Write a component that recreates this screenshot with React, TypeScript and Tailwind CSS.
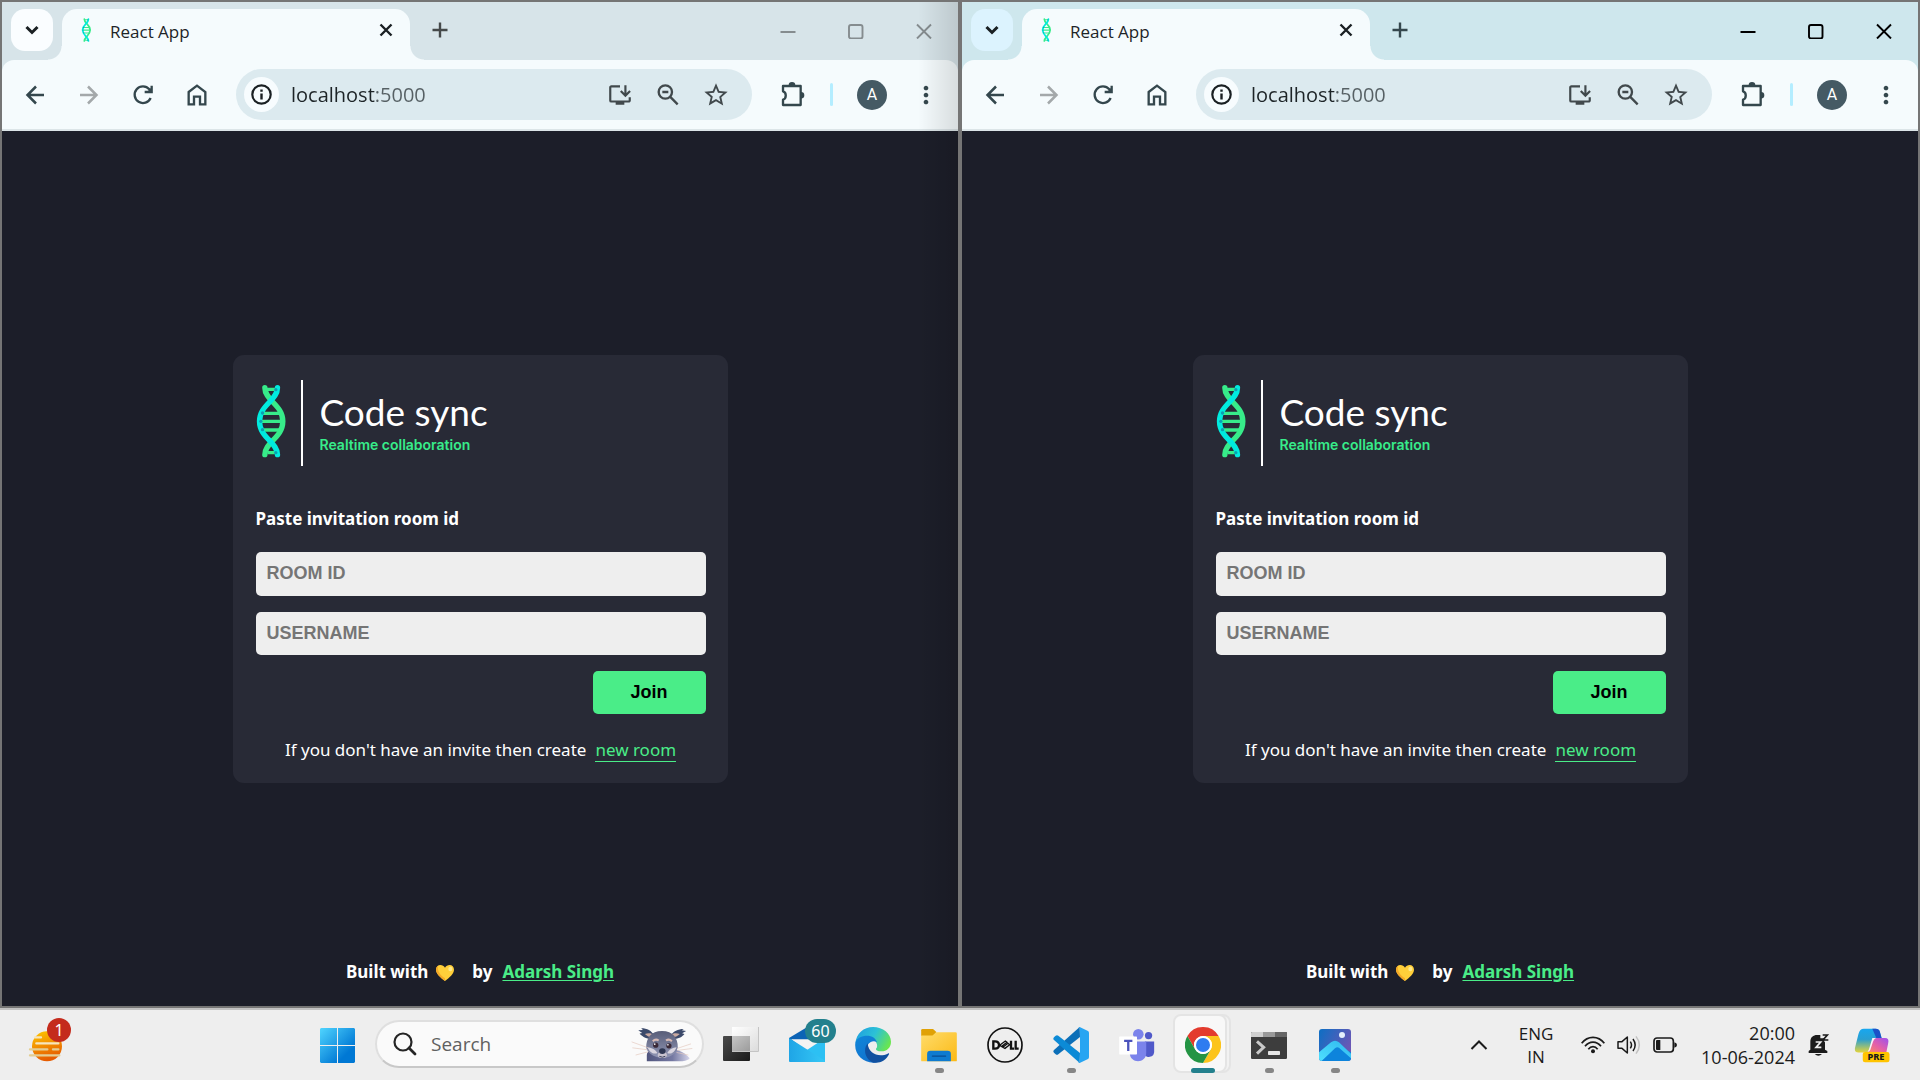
import React from "react";
import { MdOutlineInstallDesktop, MdStarBorder, MdMoreVert } from "react-icons/md";

const UI = "font-['Noto_Sans','Open_Sans',sans-serif]";

function Dna({ className }: { className: string }) {
  return (
    <svg viewBox="50 42 92 222" className={className} aria-hidden="true" fill="none">
      <g stroke="#37ec8a" strokeWidth="10">
        <path d="M78 58H112M84 248H112M68 130H124M64 154H128M68 180H124" />
      </g>
      <path d="M76 53C76 92 130 104 130 154S76 216 76 254" stroke="#37ec8a" strokeWidth="16" strokeLinecap="round" />
      <path d="M114 53C114 92 60 104 60 154S114 216 114 254" stroke="#00ebdf" strokeWidth="16" strokeLinecap="round" />
      <g fill="#0b9fb0">
        <circle cx="109" cy="59" r="5" />
        <circle cx="69" cy="129" r="5" />
        <circle cx="64" cy="154" r="5" />
        <circle cx="69" cy="179" r="5" />
        <circle cx="109" cy="248" r="5" />
      </g>
    </svg>
  );
}

function IconButton({ label, children }: { label: string; children: React.ReactNode }) {
  return (
    <button type="button" aria-label={label} className="flex size-[30px] shrink-0 items-center justify-center">
      {children}
    </button>
  );
}

function TabStrip({ active }: { active: boolean }) {
  return (
    <div className="flex h-[58px] items-start pt-[7px]">
      <button
        type="button"
        aria-label="Search tabs"
        className={`ml-[9px] flex size-[42px] shrink-0 items-center justify-center rounded-[14px] ${active ? "bg-[#dcf3fe]" : "bg-[#fafdff]"}`}
      >
        <svg viewBox="0 0 42 42" className="size-full" fill="none" stroke="#1a2023" strokeWidth="3">
          <path d="M15.500 18l5.500 5.500 5.500-5.500" />
        </svg>
      </button>
      <div className="relative ml-[9px] flex h-[51px] w-[348px] items-start rounded-t-[15px] bg-[#f5fbfd] pt-[5px] before:absolute before:bottom-0 before:-left-[14px] before:size-[14px] before:bg-[radial-gradient(circle_at_0_0,transparent_13px,#f5fbfd_14px)] after:absolute after:-right-[14px] after:bottom-0 after:size-[14px] after:bg-[radial-gradient(circle_at_100%_0,transparent_13px,#f5fbfd_14px)]">
        <Dna className="mt-1 ml-[19px] h-6 w-[11px]" />
        <span className="ml-[18px] font-['Open_Sans',sans-serif] text-[17px] leading-9 text-[#1d2427]">React App</span>
        <button type="button" aria-label="Close tab" className="mt-[2px] mr-[10px] ml-auto flex size-7 items-center justify-center">
          <svg viewBox="0 0 28 28" className="size-full" stroke="#1a2023" strokeWidth="2.400">
            <path d="M8.500 8.500l11 11M19.500 8.500l-11 11" />
          </svg>
        </button>
      </div>
      <button type="button" aria-label="New tab" className="mt-[6px] ml-[15px] flex size-[30px] items-center justify-center">
        <svg viewBox="0 0 30 30" className="size-full" stroke={active ? "#34474d" : "#45494a"} strokeWidth="2.400">
          <path d="M15 7.500v15M7.500 15h15" />
        </svg>
      </button>
      <div className={`ml-auto flex ${active ? "text-black" : "text-[#858c8f]"}`}>
        <button type="button" aria-label="Minimize" className="flex h-11 w-[68px] items-center justify-center">
          <svg viewBox="0 0 16 16" className="size-4" stroke="currentColor" strokeWidth="2"><path d="M.5 9h15" /></svg>
        </button>
        <button type="button" aria-label="Maximize" className="flex h-11 w-[68px] items-center justify-center">
          <svg viewBox="0 0 16 16" className="size-4" fill="none" stroke="currentColor" strokeWidth="1.900"><rect x="1" y="2" width="13.500" height="13.500" rx="2" /></svg>
        </button>
        <button type="button" aria-label="Close" className="flex h-11 w-[68px] items-center justify-center">
          <svg viewBox="0 0 16 16" className="size-4" stroke="currentColor" strokeWidth="1.900"><path d="M1 1.500l14 14M15 1.500l-14 14" /></svg>
        </button>
      </div>
    </div>
  );
}

function Toolbar() {
  return (
    <div className="flex h-[71px] items-center rounded-t-xl border-b-2 border-[#dce5e8] bg-[#f5fbfd] pl-[18px]">
      <div className="flex gap-6">
        <IconButton label="Back">
          <svg viewBox="0 0 30 30" className="size-full" fill="none" stroke="#34474d" strokeWidth="2.500">
            <path d="M16 6.500L7.500 15l8.500 8.500M7.500 15H24" />
          </svg>
        </IconButton>
        <IconButton label="Forward">
          <svg viewBox="0 0 30 30" className="size-full" fill="none" stroke="#a3a8aa" strokeWidth="2.500">
            <path d="M14 6.500l8.500 8.500-8.500 8.500M22.500 15H6" />
          </svg>
        </IconButton>
        <IconButton label="Reload">
          <svg viewBox="0 0 90 90" className="size-full" fill="none" stroke="#34474d" strokeWidth="7">
            <path d="M68 54A25 25 0 1 1 64 28L69 35" />
            <path d="M71 17V36H50" />
            <path d="M71 22V36H57z" fill="#34474d" stroke="none" />
          </svg>
        </IconButton>
        <IconButton label="Home">
          <svg viewBox="0 0 90 90" className="size-full" fill="none" stroke="#34474d" strokeWidth="7">
            <path d="M20 36L45 17l25 19v37H54V50H36v23H20z" />
          </svg>
        </IconButton>
      </div>
      <div className="ml-6 flex h-[51px] min-w-0 flex-1 items-center rounded-full bg-[#dceaef] pr-[21px] pl-2">
        <button type="button" aria-label="View site information" className="flex size-[35px] shrink-0 items-center justify-center rounded-full bg-[#f7fcfe]">
          <svg viewBox="0 0 21 21" className="size-[21px]" fill="none" stroke="#1a2023" strokeWidth="2.200">
            <circle cx="10.500" cy="10.500" r="9.200" />
            <path d="M10.500 9.500v6M10.500 5.500v2.200" strokeWidth="2.400" />
          </svg>
        </button>
        <input
          type="text"
          aria-label="Address"
          defaultValue="localhost:5000"
          className="ml-3 h-9 min-w-0 flex-1 bg-[linear-gradient(90deg,#1d2427_84px,#566064_84px)] bg-clip-text font-['Open_Sans',sans-serif] text-[20px] text-transparent outline-none"
        />
        <div className="flex gap-[18px] text-[#41494c]">
          <IconButton label="Install app"><MdOutlineInstallDesktop className="size-[26px]" /></IconButton>
          <IconButton label="Zoom">
            <svg viewBox="0 0 90 90" className="size-full" fill="none" stroke="currentColor" strokeWidth="7">
              <circle cx="37" cy="36" r="20" />
              <path d="M51 50l23 23M28 36h18" />
            </svg>
          </IconButton>
          <IconButton label="Bookmark this tab"><MdStarBorder className="size-7" /></IconButton>
        </div>
      </div>
      <div className="ml-[25px] flex items-center pr-[17px]">
        <IconButton label="Extensions">
          <svg viewBox="0 0 90 90" className="size-full">
            <path d="M18 18H71V75H18V59C29 56 29 37 18 34z" fill="none" stroke="#34474d" strokeWidth="7" strokeLinejoin="round" />
            <path d="M35 16a10 10 0 0 1 20 0zM72 36a10 10 0 0 1 0 20z" fill="#34474d" />
          </svg>
        </IconButton>
        <span className="ml-[23px] h-[23px] w-[3px] rounded-full bg-[#b4edff]" />
        <button type="button" aria-label="Profile" className="ml-6 size-[30px] rounded-full bg-[#455a64] font-['Roboto',sans-serif] text-[16px] leading-[30px] text-white">
          A
        </button>
        <span className="ml-6 flex">
          <IconButton label="Menu"><MdMoreVert className="size-7 text-[#34474d]" /></IconButton>
        </span>
      </div>
    </div>
  );
}

function JoinCard({ id }: { id: string }) {
  return (
    <form className="w-[495px] rounded-[11px] bg-[#282a36] pt-[23px] pr-[22px] pb-4 pl-[23px]" onSubmit={(e) => e.preventDefault()}>
      <div className="flex h-[90px] items-start pt-[2px]">
        <Dna className="mt-[4px] h-[74px] w-[31px]" />
        <div className="ml-[14px] h-[86px] w-[2px] bg-white" />
        <div className="mt-2 ml-[17px]">
          <h1 className="font-['Lato',sans-serif] text-[37px] leading-[47px] text-white">Code sync</h1>
          <p className="font-['Inter',sans-serif] text-[14px] leading-[20px] font-semibold text-[#37ec8a]">Realtime collaboration</p>
        </div>
      </div>
      <label htmlFor={`${id}-room`} className={`${UI} mt-[39px] block text-[17px] leading-6 font-bold text-white`}>
        Paste invitation room id
      </label>
      <input
        id={`${id}-room`}
        type="text"
        placeholder="ROOM ID"
        className="mt-[21px] block h-11 w-full rounded-[5px] bg-[#eee] px-[11px] font-['Liberation_Sans',sans-serif] text-[18px] font-bold text-black outline-none placeholder:text-[#757575]"
      />
      <input
        type="text"
        aria-label="Username"
        placeholder="USERNAME"
        className="mt-4 block h-[43px] w-full rounded-[5px] bg-[#eee] px-[11px] font-['Liberation_Sans',sans-serif] text-[18px] font-bold text-black outline-none placeholder:text-[#757575]"
      />
      <button type="submit" className="mt-4 ml-auto block h-[43px] w-[113px] rounded-[5px] bg-[#4aed88] font-['Liberation_Sans',sans-serif] text-[18px] font-bold text-black">
        Join
      </button>
      <p className={`${UI} mt-6 flex h-[29px] justify-center gap-[9px] text-[17px] leading-[24px] text-white`}>
        If you don't have an invite then create
        <a href="#new" className="h-6 border-b border-[#4aed88] text-[#4aed88]">new room</a>
      </p>
    </form>
  );
}

function BrowserWindow({ id, active }: { id: string; active: boolean }) {
  return (
    <section className="relative flex min-w-0 flex-1 flex-col border-2 border-[#757575] bg-[#1c1e29]">
      <div className={active ? "bg-[#cee7ed]" : "bg-[#d7e4e9]"}>
        <TabStrip active={active} />
        <Toolbar />
      </div>
      <main className="relative flex flex-1 items-center justify-center">
        <JoinCard id={id} />
        <footer className={`${UI} absolute inset-x-0 bottom-[22px] flex items-center justify-center text-[17px] leading-6 font-bold text-white`}>
          Built with
          <svg viewBox="0 0 54 48" className="mt-[2px] mr-[18px] ml-2 h-4 w-[18px]" role="img" aria-label="yellow heart">
            <path d="M27 48C14 37 0 27 0 14 0 5 6 0 13 0c6 0 11 3 14 8 3-5 8-8 14-8 7 0 13 5 13 14 0 13-14 23-27 34z" fill="#ffcf3a" />
            <path d="M27 48C14 37 0 27 0 14 0 8 3 4 6 2 3 18 14 32 27 40z" fill="#f5a928" />
            <ellipse cx="43" cy="12" rx="6" ry="7" fill="#ffe98c" />
          </svg>
          by
          <a href="#author" className="ml-[10px] text-[#4aed88] underline underline-offset-2">Adarsh Singh</a>
        </footer>
      </main>
      {!active && <div className="pointer-events-none absolute inset-y-0 right-0 w-10 bg-linear-to-r from-transparent to-black/12" />}
    </section>
  );
}

function TaskIcon({ label, running, children }: { label: string; running?: boolean; children: React.ReactNode }) {
  return (
    <button type="button" aria-label={label} className="relative flex h-[70px] w-[66px] shrink-0 items-center justify-center">
      {children}
      {running && <span className="absolute bottom-[7px] left-[29px] h-[5px] w-[9px] rounded-full bg-[#868686]" />}
    </button>
  );
}

function Numbat() {
  return (
    <svg viewBox="786 88 188 104" className="h-[35px] w-[62px]" aria-hidden="true">
      <defs>
        <linearGradient id="body" x1="0" x2="1"><stop offset="0" stopColor="#50557d" /><stop offset=".6" stopColor="#7579a2" /><stop offset="1" stopColor="#d5d5ea" /></linearGradient>
        <linearGradient id="head" x1="0" x2="0" y1="0" y2="1"><stop offset="0" stopColor="#585d78" /><stop offset="1" stopColor="#9196b5" /></linearGradient>
      </defs>
      <path d="M834 191V172c0-14 20-22 44-22 42 0 70 12 86 32-6 8-20 9-30 9z" fill="url(#body)" />
      <path d="M846 124c-18-2-28-10-34-17l8-2-12-8 14-1-5-5c18 0 32 8 38 20z" fill="#3c4a6b" />
      <path d="M914 124c18-2 28-8 34-16l-7-2 12-7-13-2 6-4c-18 0-32 8-38 18z" fill="#3c4a6b" />
      <path d="M852 118c-10 0-18-4-24-10 10-4 20-3 28 3zM910 118c10 0 18-4 24-10-10-4-20-3-28 3z" fill="#c9a9a0" />
      <path d="M832 150c0-30 14-51 48-51s48 21 48 51c-6 20-28 31-46 31s-44-10-50-31z" fill="url(#head)" />
      <path d="M836 148c10 2 24 4 30 18-12 6-26-6-30-18zM924 148c-10 2-22 4-28 18 12 6 24-6 28-18z" fill="#d9d5e0" />
      <path d="M852 130c6-6 12-6 18-2M892 128c6-4 12-4 18 2" stroke="#d6b9b4" strokeWidth="6" fill="none" />
      <circle cx="861" cy="142" r="8" fill="#3b2a38" /><circle cx="901" cy="144" r="8" fill="#3b2a38" />
      <circle cx="858" cy="139" r="2.500" fill="#fff" /><circle cx="898" cy="141" r="2.500" fill="#fff" />
      <ellipse cx="881" cy="172" rx="14" ry="9" fill="#c8c3cf" />
      <ellipse cx="881" cy="160" rx="10" ry="9" fill="#2f3854" />
      <path d="M872 176q9 5 18 0" stroke="#343a55" strokeWidth="3" fill="none" />
      <path d="M838 150l-50-18M836 156l-46-6M838 162l-38 10M926 152l42-14M926 158l46-6M924 164l36 8" stroke="#e4c8bd" strokeWidth="2" />
    </svg>
  );
}

function Taskbar() {
  return (
    <nav className="flex h-[72px] shrink-0 border-t-2 border-[#c2c2c2] bg-[#eee]" aria-label="Taskbar">
      <div className="w-[304px] shrink-0 pl-[27px]">
        <button type="button" aria-label="Widgets" className="relative block h-[70px] w-[50px] pb-2">
          <svg viewBox="84 200 132 132" className="size-[44px]" aria-hidden="true">
            <defs><linearGradient id="sun" x1="0" x2="0.300" y1="0" y2="1"><stop offset="0" stopColor="#ffc800" /><stop offset="1" stopColor="#e65c00" /></linearGradient></defs>
            <circle cx="144" cy="282" r="45" fill="url(#sun)" />
            <g stroke="#f6e6bd" strokeWidth="7" strokeLinecap="round"><path d="M108 255h18M112 273h66" /><path d="M93 291h52M162 291h16M93 309h88" stroke="#e3cd93" /></g>
          </svg>
          <span className="absolute top-2 left-5 size-6 rounded-full bg-[#c42b1c] text-center font-['Noto_Sans',sans-serif] text-[16px] leading-6 text-white">1</span>
        </button>
      </div>
      <TaskIcon label="Start">
        <svg viewBox="0 0 35 35" className="size-[35px]">
          <defs><linearGradient id="win" x1="0" y1="0" x2="35" y2="35" gradientUnits="userSpaceOnUse"><stop stopColor="#50d5ff" /><stop offset=".75" stopColor="#0078d4" /></linearGradient></defs>
          <path d="M1 0H17V17H0V1zM18 0H34L35 1V17H18zM0 18H17V35H1L0 34zM18 18H35V34L34 35H18z" fill="url(#win)" />
        </svg>
      </TaskIcon>
      <label className="mt-[10px] ml-[5px] flex h-12 w-[329px] shrink-0 items-center rounded-full border-2 border-[#dfdfdf] border-b-[#c8c8c8] bg-[#fafafa] pr-[9px] pl-4">
        <svg viewBox="0 0 24 24" className="size-6" fill="none" stroke="#252525" strokeWidth="2.200" strokeLinecap="round">
          <circle cx="10" cy="10" r="8.500" /><path d="M16 16l6 6" strokeWidth="2.800" />
        </svg>
        <input type="search" aria-label="Search" placeholder="Search" className="ml-[14px] w-0 flex-1 bg-transparent font-['Open_Sans',sans-serif] text-[19px] outline-none placeholder:text-[#606060]" />
        <Numbat />
      </label>
      <div className="ml-1 flex shrink-0">
        <TaskIcon label="Task view">
          <svg viewBox="0 0 36 36" className="size-9">
            <defs>
              <linearGradient id="tv1" x1="0" y1="0" x2="1" y2="1"><stop stopColor="#4a4a4a" /><stop offset="1" stopColor="#1a1a1a" /></linearGradient>
              <linearGradient id="tv2" x1="0" y1="0" x2="1" y2="1"><stop stopColor="#ffffff" /><stop offset="1" stopColor="#dcdcdc" /></linearGradient>
              <linearGradient id="tv3" x1="0" y1="0" x2="1" y2="1"><stop stopColor="#c6c6c6" /><stop offset="1" stopColor="#9c9c9c" /></linearGradient>
            </defs>
            <rect y="9" width="27" height="25" rx="1" fill="url(#tv1)" />
            <path d="M9 0h26v24H9z" fill="url(#tv2)" />
            <path d="M9 9h18v15H9z" fill="url(#tv3)" />
            <path d="M9 24.500h26.500V0" stroke="#c4c4c4" fill="none" />
          </svg>
        </TaskIcon>
        <TaskIcon label="Mail">
          <svg viewBox="0 0 108 102" className="h-[34px] w-9">
            <defs><linearGradient id="mail" x1="0" x2="1"><stop stopColor="#1fa5e6" /><stop offset="1" stopColor="#35c8f6" /></linearGradient></defs>
            <path d="M0 30L50 0h20l38 28v30H0z" fill="#0c63b5" />
            <path d="M6 34h96L58 72z" fill="#f3f3f3" />
            <path d="M108 30V102H0z" fill="#2cc0f3" />
            <path d="M0 30L108 98q0 4-4 4H4q-4 0-4-4z" fill="url(#mail)" />
          </svg>
          <span className="absolute top-[9px] left-[31px] h-6 w-[31px] rounded-full bg-[#23808d] text-center font-['Noto_Sans',sans-serif] text-[16px] leading-6 text-white">60</span>
        </TaskIcon>
        <TaskIcon label="Edge">
          <svg viewBox="0 0 108 108" className="size-9">
            <defs>
              <linearGradient id="e1" x1="0" x2="1" y1=".2" y2=".6"><stop stopColor="#1f9fe0" /><stop offset=".5" stopColor="#2cc1d6" /><stop offset="1" stopColor="#6ae64e" /></linearGradient>
              <linearGradient id="e2" x1="0" x2=".6" y1="0" y2="1"><stop stopColor="#0f86d9" /><stop offset="1" stopColor="#1272ce" /></linearGradient>
            </defs>
            <path d="M1 48C4 20 26 0 54 0c30 0 54 20 54 44 0 18-13 29-28 29-12 0-18-4-17-8 5-5 4-12 1-18-8-17-42-22-63 1z" fill="url(#e1)" />
            <path d="M1 48C5 33 20 26 36 26c15 0 27 8 30 20-8-7-22-3-28 8-9 18 3 44 26 49 8 2 10 1 6 2C34 115-4 88 1 48z" fill="url(#e2)" />
            <path d="M38 49c-16 20-6 50 18 58 20 3 38-8 46-25 1-3-1-4-4-2-24 12-58 2-60-31z" fill="#1050a0" />
          </svg>
        </TaskIcon>
        <TaskIcon label="File Explorer" running>
          <svg viewBox="0 0 108 100" className="h-[33px] w-9">
            <defs><linearGradient id="fold" x1="0" y1="0" x2="1" y2="1"><stop stopColor="#ffdc6b" /><stop offset="1" stopColor="#fbb915" /></linearGradient></defs>
            <path d="M0 4q0-4 4-4h32l10 9-10 12H0z" fill="#e0a106" />
            <path d="M0 20h34l12-10h58q4 0 4 4v82q0 2-3 2H3q-3 0-3-2z" fill="url(#fold)" />
            <path d="M18 98V76q0-10 10-10h52q10 0 10 10v22z" fill="#0f7bd0" />
            <path d="M34 82h40" stroke="#084d93" strokeWidth="4" strokeLinecap="round" />
          </svg>
        </TaskIcon>
        <TaskIcon label="Dell">
          <svg viewBox="0 0 108 108" className="size-9" fill="none" stroke="#111">
            <circle cx="54" cy="54" r="51" strokeWidth="5" />
            <path d="M19 43v22h5c16 0 16-22 0-22zM72 41v24h9M86 41v24h9" strokeWidth="7" />
            <path d="M38 55L55 42l5 4-13 10 3 3 13-10 5 4-14 11z" strokeWidth="4" />
          </svg>
        </TaskIcon>
        <TaskIcon label="Visual Studio Code" running>
          <svg viewBox="0 0 108 108" className="size-9">
            <path d="M80 0L3 69q-4 4 0 8l5 5q4 3 8 0L81 30z" fill="#0c6fb8" />
            <path d="M80 108L3 39q-4-4 0-8l5-5q4-3 8 0L81 78z" fill="#0c8ad6" />
            <path d="M80 0l25 12q3 2 3 6v72q0 4-3 6L80 108q-3 0-5-3 6 2 6-4V7q0-6-6-4z" fill="#27a5f2" />
          </svg>
        </TaskIcon>
        <TaskIcon label="Teams">
          <svg viewBox="0 0 108 100" className="h-[33px] w-9">
            <circle cx="58" cy="16" r="16" fill="#7b83eb" /><circle cx="89" cy="20" r="11" fill="#5059c9" />
            <path d="M78 38h28v30c0 18-20 20-28 12z" fill="#5059c9" />
            <path d="M32 38h50v34c0 34-50 34-50 0z" fill="#7b83eb" />
            <rect y="23" width="54" height="54" rx="2" fill="#fff" />
            <path d="M15 36h25M27.500 36v31" stroke="#4b53bc" strokeWidth="7" />
          </svg>
        </TaskIcon>
        <TaskIcon label="Chrome">
          <span className="absolute top-[4px] left-5 h-[59px] w-[41px] rounded-lg border-2 border-[#e4e4e4] bg-[#f2f2f2]" />
          <span className="absolute top-[4px] left-[3px] h-[59px] w-[54px] rounded-lg border-2 border-[#e4e4e4] bg-[#f8f8f8]" />
          <svg viewBox="-18 -18 36 36" className="relative size-9">
            <path d="M-7.790 4.500L-15.590-9A18 18 0 0 1 15.590-9H0A9 9 0 0 0-7.790 4.500z" fill="#e33b2e" />
            <path d="M0-9H15.590A18 18 0 0 1 0 18L7.790 4.500A9 9 0 0 0 0-9z" fill="#fcc41c" />
            <path d="M7.790 4.500L0 18A18 18 0 0 1-15.590-9L-7.790 4.500A9 9 0 0 0 7.790 4.500z" fill="#249444" />
            <circle r="9" fill="#fff" /><circle r="7" fill="#2e7cf0" />
          </svg>
          <span className="absolute bottom-[7px] left-[21px] h-[5px] w-6 rounded-full bg-[#23808d]" />
        </TaskIcon>
        <TaskIcon label="Terminal" running>
          <svg viewBox="0 0 108 81" className="h-[27px] w-9">
            <rect width="108" height="81" rx="4" fill="#3d3d3d" />
            <path d="M4 0h32v15H0V4q0-4 4-4z" fill="#cfcfcf" /><path d="M36 0h36v15H36z" fill="#999" /><path d="M72 0h32q4 0 4 4v11H72z" fill="#666" />
            <path d="M18 28l20 18-20 19" fill="none" stroke="#c9c9c9" strokeWidth="9" />
            <rect x="51" y="57" width="36" height="12" rx="2" fill="#e5e5e5" />
          </svg>
        </TaskIcon>
        <TaskIcon label="Photos" running>
          <svg viewBox="0 0 96 96" className="size-8">
            <defs>
              <linearGradient id="ph" x1="0" x2="1" y1="0" y2=".5"><stop stopColor="#0c6fc4" /><stop offset="1" stopColor="#6b57b5" /></linearGradient>
              <linearGradient id="ph2" x1="1" x2="0" y1="0" y2="1"><stop stopColor="#2fb8ee" /><stop offset="1" stopColor="#4fe0ff" /></linearGradient>
              <clipPath id="phc"><rect width="96" height="96" rx="9" /></clipPath>
            </defs>
            <g clipPath="url(#phc)">
              <rect width="96" height="96" fill="url(#ph)" />
              <path d="M8 96L52 50l44 20v26z" fill="#0d84dc" />
              <path d="M0 70l36-30q12-9 24 0l36 34v14L60 56q-6-4-12 2L8 96H0z" fill="url(#ph2)" />
              <circle cx="69" cy="18" r="9" fill="#e4f0fc" />
            </g>
          </svg>
        </TaskIcon>
      </div>
      <div className="ml-auto flex items-center font-['Open_Sans',sans-serif] text-[#1b1b1b]">
        <button type="button" aria-label="Show hidden icons" className="flex h-10 w-9 items-center justify-center">
          <svg viewBox="0 0 18 12" className="h-3 w-[18px]" fill="none" stroke="currentColor" strokeWidth="2"><path d="M1.500 10L9 2.500l7.500 7.500" /></svg>
        </button>
        <button type="button" className="ml-[15px] w-12 text-center text-[17px] leading-[23px]">ENG<br />IN</button>
        <button type="button" aria-label="Network, volume and battery" className="ml-[21px] flex items-center gap-3">
          <svg viewBox="0 0 72 54" className="h-[18px] w-6" fill="none" stroke="currentColor" strokeWidth="5">
            <path d="M2 22C20-2 52-2 70 22M12 31c13-17 35-17 48 0M22 40c8-11 20-11 28 0" /><circle cx="36" cy="46" r="6" fill="currentColor" stroke="none" />
          </svg>
          <svg viewBox="0 0 72 60" className="h-5 w-6" fill="none" stroke="currentColor" strokeWidth="4.500" strokeLinejoin="round">
            <path d="M3 20h12L31 6v48L15 40H3zM40 20q7 10 0 20M48 12q13 18 0 36" /><path d="M57 4q20 26 0 52" stroke="#c2c2c2" />
          </svg>
          <svg viewBox="0 0 72 48" className="h-4 w-6" fill="none" stroke="currentColor" strokeWidth="5">
            <rect x="3" y="3" width="58" height="42" rx="9" /><path d="M9 11q0-2 3-2h10v30H12q-3 0-3-2z" fill="currentColor" stroke="none" /><path d="M64 16q8 2 8 8t-8 8z" fill="currentColor" stroke="none" />
          </svg>
        </button>
        <button type="button" className="ml-5 w-[98px] text-right text-[18px] leading-6 whitespace-nowrap">20:00<br />10-06-2024</button>
        <button type="button" aria-label="Notifications" className="ml-[13px]">
          <svg viewBox="0 0 66 72" className="h-6 w-[22px]">
            <path d="M7 50V27C7 12 16 6 27 6h10v10h12v10l2 2v22l7 4v6H2v-6z" fill="currentColor" />
            <path d="M20 63h22q-11 10-22 0z" fill="currentColor" />
            <path d="M23 27h15L24 43h16" fill="none" stroke="#eee" strokeWidth="5" />
            <path d="M44 6h14L45 21h16" fill="none" stroke="currentColor" strokeWidth="5" />
          </svg>
        </button>
        <button type="button" aria-label="Copilot" className="mr-[30px] ml-6">
          <svg viewBox="1183 82 108 106" className="h-[35px] w-9">
            <defs>
              <linearGradient id="cp1" x1="0" x2="0" y1="0" y2="1"><stop stopColor="#17a7f0" /><stop offset=".45" stopColor="#2a9fd0" /><stop offset="1" stopColor="#e4d43a" /></linearGradient>
              <linearGradient id="cp2" x1="1" x2="0" y1="0" y2="1"><stop stopColor="#9a50f0" /><stop offset=".5" stopColor="#e45fa8" /><stop offset="1" stopColor="#ff9254" /></linearGradient>
            </defs>
            <path d="M1212 84h36q10 0 13 10l5 18h-18q-8 0-11 10l-8 26q-3 8-11 8h-22q-14 0-10-16l10-40q4-16 16-16z" fill="url(#cp1)" />
            <path d="M1238 84h10q10 0 13 10l5 18h-16z" fill="#1b51c8" />
            <path d="M1252 112h24q14 0 10 16l-6 30h-62q8-2 11-10l7-24q4-12 16-12z" fill="url(#cp2)" />
            <path d="M1238 112h10q-6 4-8 12l-8 24q-2 6-8 6l4-8z" fill="#f7f2fa" />
            <rect x="1209" y="155" width="81" height="31" rx="7" fill="#ffc400" />
            <text x="1249" y="180" textAnchor="middle" fontFamily="Noto Sans" fontWeight="800" fontSize="28" fill="#1a1a1a">PRE</text>
          </svg>
        </button>
      </div>
    </nav>
  );
}

export default function App() {
  return (
    <div className="flex min-h-screen flex-col bg-[#eee]">
      <div className="flex flex-1">
        <BrowserWindow id="left" active={false} />
        <BrowserWindow id="right" active />
      </div>
      <Taskbar />
    </div>
  );
}
